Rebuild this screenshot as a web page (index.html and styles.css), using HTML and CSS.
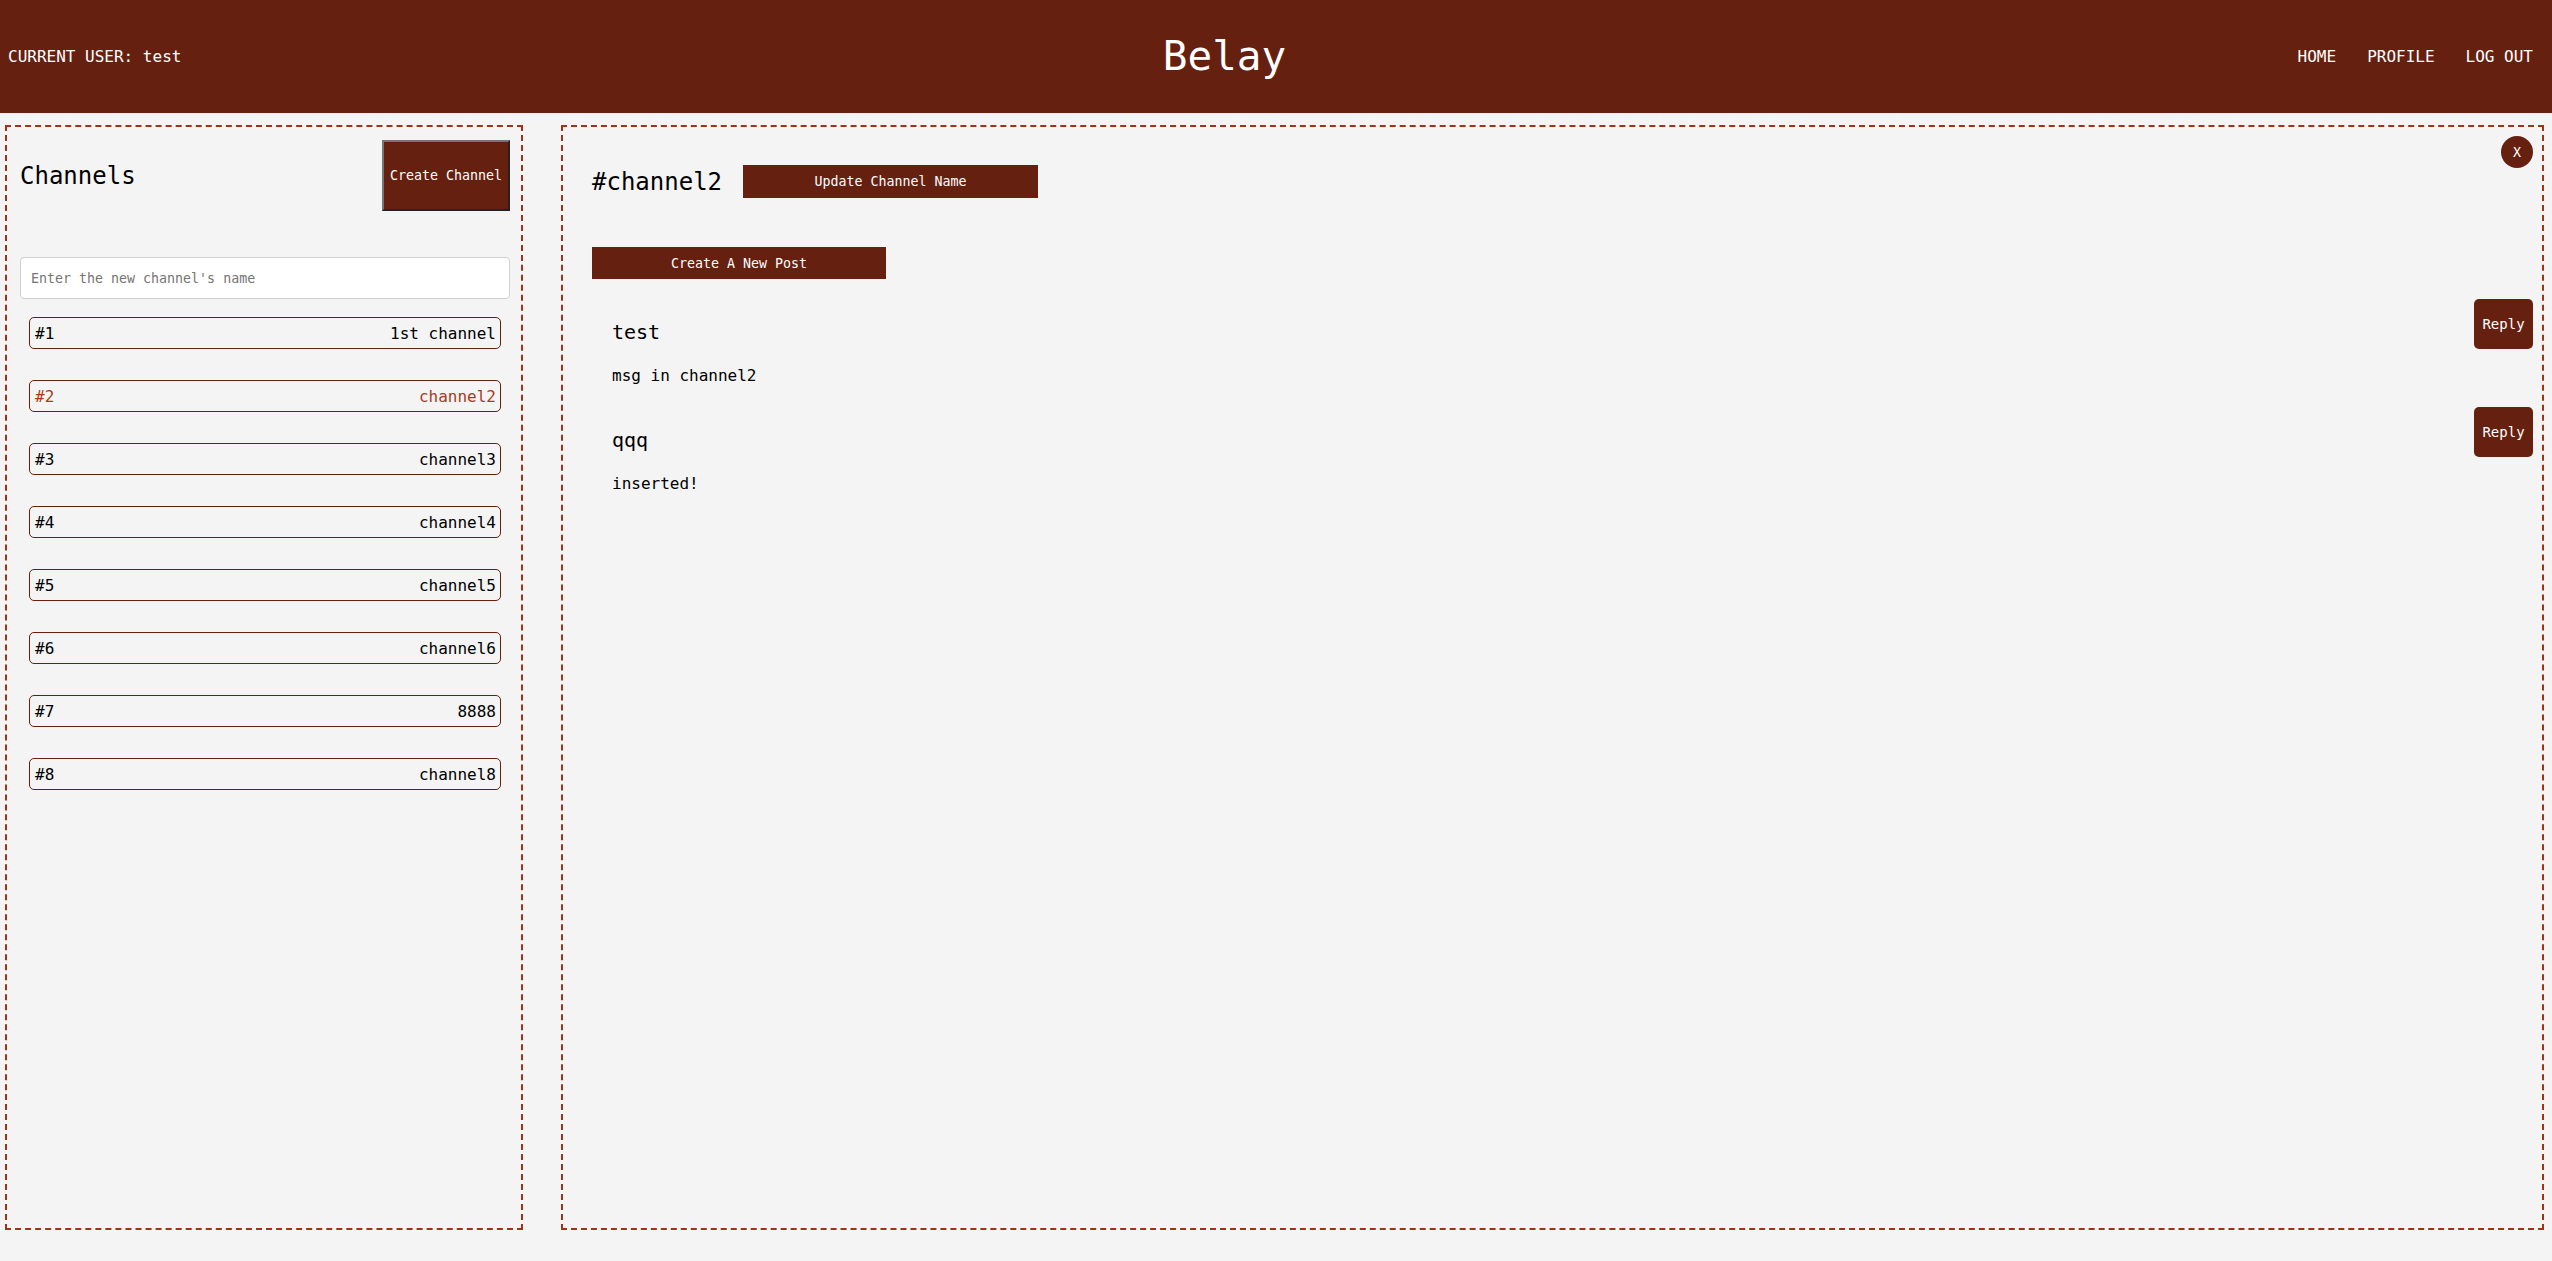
FILE: index.html
```html
<!DOCTYPE html>
<html lang="en">
<head>
<meta charset="utf-8">
<title>Belay</title>
<link rel="stylesheet" href="styles.css">
</head>
<body>
<header class="topbar">
  <div class="user">CURRENT USER: test</div>
  <h1 class="brand">Belay</h1>
  <nav class="nav">
    <a class="nav-link">HOME</a>
    <a class="nav-link">PROFILE</a>
    <a class="nav-link">LOG OUT</a>
  </nav>
</header>
<main class="layout">
  <section class="panel channels">
    <div class="channels-head">
      <h2 class="channels-title">Channels</h2>
      <button class="btn btn-create">Create Channel</button>
    </div>
    <input class="channel-input" type="text" placeholder="Enter the new channel's name">
    <ul class="channel-list">
      <li class="channel-item"><span>#1</span><span>1st channel</span></li>
      <li class="channel-item active"><span>#2</span><span>channel2</span></li>
      <li class="channel-item"><span>#3</span><span>channel3</span></li>
      <li class="channel-item"><span>#4</span><span>channel4</span></li>
      <li class="channel-item"><span>#5</span><span>channel5</span></li>
      <li class="channel-item"><span>#6</span><span>channel6</span></li>
      <li class="channel-item"><span>#7</span><span>8888</span></li>
      <li class="channel-item"><span>#8</span><span>channel8</span></li>
    </ul>
  </section>
  <section class="panel chat">
    <button class="close">X</button>
    <div class="chat-head">
      <h2 class="chat-title">#channel2</h2>
      <button class="btn btn-update">Update Channel Name</button>
    </div>
    <button class="btn btn-post">Create A New Post</button>
    <div class="posts">
      <div class="post">
        <div class="post-body">
          <h3 class="post-author">test</h3>
          <p class="post-text">msg in channel2</p>
        </div>
        <button class="reply">Reply</button>
      </div>
      <div class="post">
        <div class="post-body">
          <h3 class="post-author">qqq</h3>
          <p class="post-text">inserted!</p>
        </div>
        <button class="reply">Reply</button>
      </div>
    </div>
  </section>
</main>
</body>
</html>
```

FILE: styles.css
```css
* {
  box-sizing: border-box;
}

html, body {
  margin: 0;
  padding: 0;
  height: 100%;
}

body {
  background: #f4f4f4;
  color: #000;
  font-family: "DejaVu Sans Mono", "Liberation Mono", monospace;
  font-size: 16px;
}

.topbar {
  height: 113px;
  background: #66200f;
  color: #fff;
  display: flex;
  align-items: center;
  justify-content: space-between;
  padding: 0 19px 0 8px;
}

.user {
  font-size: 16px;
}

.brand {
  margin: 0 30px 0 0;
  font-size: 41px;
  font-weight: normal;
  line-height: 1;
}

.nav {
  display: flex;
  gap: 31px;
}

.nav-link {
  font-size: 16px;
  color: #fff;
  text-decoration: none;
}

.layout {
  height: calc(100% - 113px);
  display: grid;
  grid-template-columns: 518px 1fr;
  gap: 38px;
  padding: 12px 8px 31px 5px;
}

.panel {
  border: 2px dashed #9e3318;
  position: relative;
  height: 100%;
}

.channels {
  padding: 13px 11px 0 13px;
}

.channels-head {
  display: flex;
  align-items: center;
  justify-content: space-between;
}

.channels-title {
  margin: 0;
  font-size: 24px;
  font-weight: normal;
}

.btn {
  font-family: "DejaVu Sans Mono", "Liberation Mono", monospace;
  font-size: 13.3px;
  color: #fff;
  background: #66200f;
  cursor: pointer;
}

.btn-create {
  width: 128px;
  height: 71px;
  border: 2px solid;
  border-color: #767676 #222 #222 #767676;
  padding: 0;
}

.channel-input {
  display: block;
  width: 100%;
  height: 42px;
  margin-top: 46px;
  border: 1px solid #cfcfcf;
  border-radius: 4px;
  background: #fff;
  padding: 0 10px;
  font-family: "DejaVu Sans Mono", "Liberation Mono", monospace;
  font-size: 13.3px;
}

.channel-input::placeholder {
  color: #757575;
}

.channel-list {
  list-style: none;
  margin: 18px 0 0;
  padding: 0 9px;
}

.channel-item {
  height: 32px;
  margin-bottom: 31px;
  border: 1px solid #66200f;
  border-radius: 5px;
  display: flex;
  align-items: center;
  justify-content: space-between;
  padding: 0 4px 0 5px;
  font-size: 16px;
}

.channel-item.active {
  color: #a63c22;
}

.chat {
  padding: 38px 9px 0 29px;
}

.close {
  position: absolute;
  top: 9px;
  right: 9px;
  width: 32px;
  height: 32px;
  border-radius: 50%;
  border: none;
  background: #66200f;
  color: #fff;
  font-family: "DejaVu Sans Mono", "Liberation Mono", monospace;
  font-size: 13.3px;
  padding: 0;
}

.chat-head {
  display: flex;
  align-items: center;
  gap: 21px;
}

.chat-title {
  margin: 0;
  font-size: 24px;
  font-weight: normal;
}

.btn-update {
  width: 295px;
  height: 33px;
  border: none;
}

.btn-post {
  display: block;
  width: 294px;
  height: 32px;
  border: none;
  margin-top: 49px;
}

.posts {
  margin-top: 20px;
  padding-left: 20px;
}

.post {
  display: flex;
  justify-content: space-between;
  align-items: flex-start;
  height: 108px;
}

.post-author {
  margin: 21px 0 0;
  font-size: 20px;
  font-weight: normal;
  line-height: 24px;
}

.post-text {
  margin: 22px 0 0;
  font-size: 16px;
  line-height: 20px;
}

.reply {
  width: 59px;
  height: 50px;
  border: none;
  border-radius: 5px;
  background: #66200f;
  color: #fff;
  font-family: "DejaVu Sans Mono", "Liberation Mono", monospace;
  font-size: 14px;
  padding: 0;
}
```
